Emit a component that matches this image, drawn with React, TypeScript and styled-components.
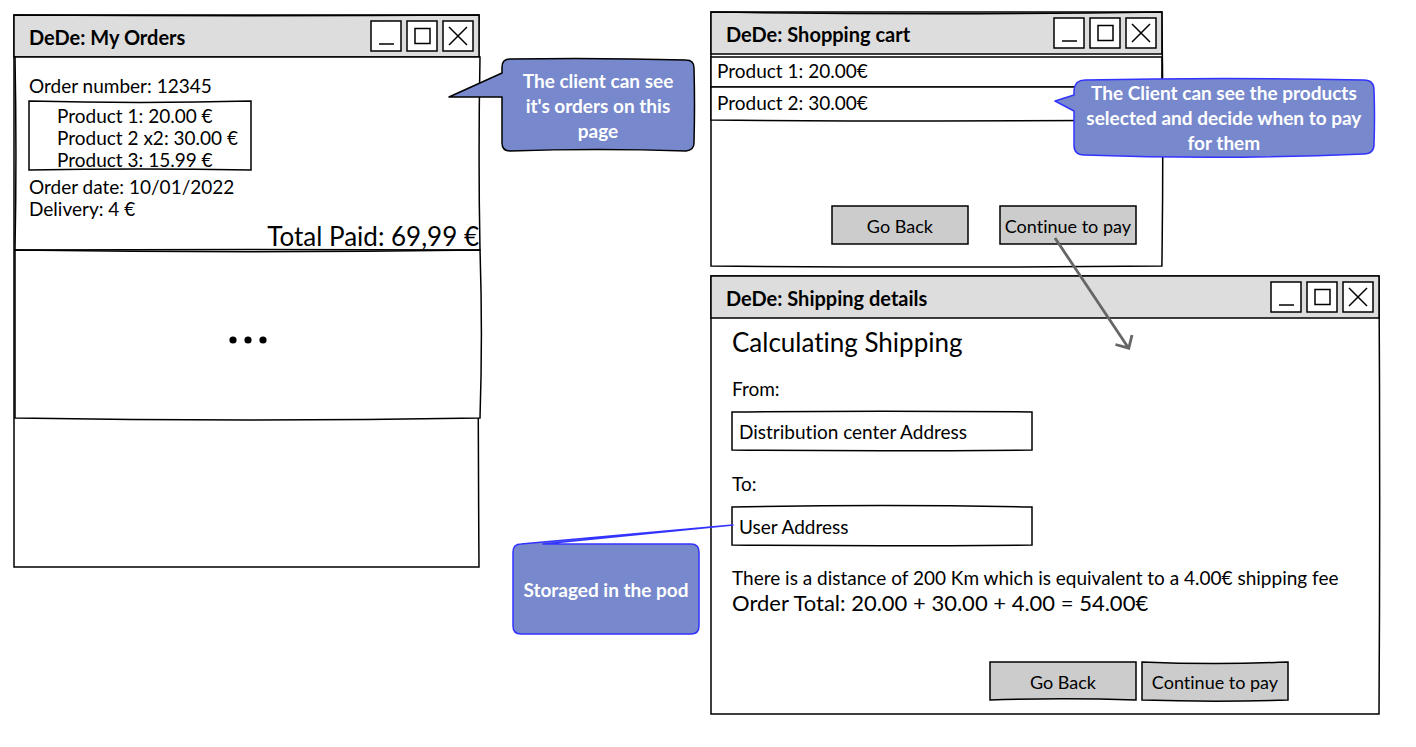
import React from "react";
import styled, { createGlobalStyle } from "styled-components";

const GlobalStyle = createGlobalStyle`
  *, *::before, *::after { box-sizing: border-box; }
  body {
    margin: 0;
    background: #ffffff;
    color: #000000;
    font-family: Lato, sans-serif;
    font-size: 19px;
    line-height: 22px;
    font-variant-ligatures: none;
  }
  h1, h2, p, ul { margin: 0; padding: 0; }
  h2 { font-weight: 400; }
  ul { list-style: none; }
  button, input { font: inherit; color: inherit; font-variant-ligatures: none; }
`;

/* ---------- hand-drawn outlines ---------- */

type Bow = [number, number, number, number];

const Outline = styled.svg`
  position: absolute;
  inset: 0;
  z-index: -1;
  width: 100%;
  height: 100%;
  overflow: visible;
  pointer-events: none;
`;

/* Rectangle whose four edges bulge by a percentage of the box: top, right, bottom, left. */
function Frame({ fill = "#ffffff", bow = [0, 0, 0, 0] }: { fill?: string; bow?: Bow }) {
  const [t, r, b, l] = bow;
  return (
    <Outline viewBox="0 0 100 100" preserveAspectRatio="none" aria-hidden="true">
      <path
        d={`M0 0 Q50 ${t * 2} 100 0 Q${100 + r * 2} 50 100 100 Q50 ${100 + b * 2} 0 100 Q${l * 2} 50 0 0 Z`}
        fill={fill}
        stroke="#000000"
        strokeWidth={1.5}
        vectorEffect="non-scaling-stroke"
      />
    </Outline>
  );
}

const Sketched = styled.div`
  position: relative;
  isolation: isolate;
`;

/* ---------- board ---------- */

const Board = styled.main`
  display: grid;
  grid-template-columns: 465fr 668fr;
  column-gap: 232px;
  align-items: start;
  padding: 12px 37px 32px 14px;
`;

const LeftColumn = styled.div`
  padding-top: 3px;
`;

const RightColumn = styled.div`
  display: flex;
  flex-direction: column;
  gap: 10px;
`;

/* ---------- windows ---------- */

const Window = styled(Sketched).attrs({ as: "section" })<{ $height: number; $width?: string; $layer?: number }>`
  width: ${(p) => p.$width ?? "100%"};
  min-height: ${(p) => p.$height}px;
  z-index: ${(p) => p.$layer ?? 1};
`;

const Bar = styled(Sketched).attrs({ as: "header" })`
  display: flex;
  align-items: center;
  justify-content: space-between;
  height: 42px;
  padding: 0 6px 0 15px;
`;

const BarTitle = styled.h1`
  font-size: 20px;
  line-height: 24px;
  font-weight: 700;
  padding-top: 2px;
`;

const Controls = styled.div`
  display: flex;
  gap: 6px;
`;

const Control = styled.button`
  display: flex;
  width: 30px;
  height: 30px;
  padding: 0;
  border: 0;
  background: none;

  svg {
    display: block;
    overflow: visible;
  }
`;

const controlMarks = [
  { label: "Minimize", d: "M8 23H23" },
  { label: "Maximize", d: "M8 7.5H23V22.5H8Z" },
  { label: "Close", d: "M6 6L24 24M24 6L6 24" },
];

function TitleBar({ title, bow }: { title: string; bow?: Bow }) {
  return (
    <Bar>
      <Frame fill="#dddddd" bow={bow} />
      <BarTitle>{title}</BarTitle>
      <Controls>
        {controlMarks.map((mark) => (
          <Control key={mark.label} type="button" aria-label={mark.label}>
            <svg width="30" height="30" viewBox="0 0 30 30" stroke="#000000" strokeWidth="1.5">
              <rect width="30" height="30" fill="#ffffff" />
              <path d={mark.d} fill="none" />
            </svg>
          </Control>
        ))}
      </Controls>
    </Bar>
  );
}

/* ---------- orders ---------- */

const OrderPanel = styled(Sketched)`
  display: flex;
  flex-direction: column;
  height: 193px;
  margin: 0 -1px 0 1px;
  padding: 18px 1px 0 14px;
`;

const MorePanel = styled(Sketched)`
  display: flex;
  align-items: center;
  justify-content: center;
  min-height: 168px;
  margin: 0 -1px 0 1px;
  padding-top: 12px;
`;

const OrderProducts = styled(Sketched).attrs({ as: "ul" })`
  flex: none;
  width: 222px;
  height: 69px;
  margin: 4px 0 6px;
  padding: 4px 0 0 28px;
  white-space: nowrap;
`;

const Total = styled.p`
  align-self: flex-end;
  padding-top: 2px;
  font-size: 26px;
  line-height: 28px;
  white-space: nowrap;
`;

/* ---------- cart ---------- */

const CartList = styled.ul`
  padding-top: 3px;
`;

const CartRow = styled(Sketched).attrs({ as: "li" })<{ $height: number }>`
  display: flex;
  align-items: center;
  height: ${(p) => p.$height}px;
  padding: 0 6px 2px;
`;

const Actions = styled.div<{ $gap: number; $top: number; $right: number }>`
  display: flex;
  justify-content: flex-end;
  gap: ${(p) => p.$gap}px;
  padding: ${(p) => p.$top}px ${(p) => p.$right}px 0 0;
`;

const ActionButton = styled.button<{ $width: number }>`
  position: relative;
  isolation: isolate;
  width: ${(p) => p.$width}px;
  height: 38px;
  padding: 2px 0 0;
  border: 0;
  background: none;
  font-size: 18px;
  white-space: nowrap;
`;

const Linked = styled.div`
  position: relative;
`;

const Arrow = styled.svg`
  position: absolute;
  left: 53px;
  top: 31px;
  pointer-events: none;
`;

/* ---------- shipping ---------- */

const ShippingForm = styled.form`
  display: flex;
  flex-direction: column;
  padding: 6px 0 0 21px;
`;

const Heading = styled.h2`
  margin-bottom: 19px;
  font-size: 26px;
  line-height: 36px;
`;

const FieldLabel = styled.label`
  margin-bottom: 13px;
  line-height: 20px;
`;

const Field = styled(Sketched)`
  width: 300px;
  height: 38px;
  margin-bottom: 24px;
`;

const FieldInput = styled.input`
  width: 100%;
  height: 100%;
  padding: 0 7px;
  border: 0;
  background: none;
  outline: none;
`;

const Note = styled.p`
  margin-top: -3px;
  line-height: 24px;
`;

const OrderTotal = styled.p`
  font-size: 22px;
  line-height: 26px;
`;

/* ---------- callouts ---------- */

const CalloutBox = styled.aside<{ $w: number; $h: number; $x: string; $y: number }>`
  position: absolute;
  left: ${(p) => p.$x};
  top: ${(p) => p.$y}px;
  z-index: 2;
  display: flex;
  align-items: center;
  justify-content: center;
  width: ${(p) => p.$w}px;
  height: ${(p) => p.$h}px;
  color: #ffffff;
  font-size: 19px;
  font-weight: 700;
  line-height: 25px;
  text-align: center;
  white-space: nowrap;
`;

interface CalloutProps {
  width: number;
  height: number;
  x: string;
  y: number;
  stroke: string;
  path: string;
  lines: string[];
}

function Callout({ width, height, x, y, stroke, path, lines }: CalloutProps) {
  return (
    <CalloutBox $w={width} $h={height} $x={x} $y={y}>
      <Outline viewBox={`0 0 ${width} ${height}`} aria-hidden="true">
        <path d={path} fill="#7788cc" stroke={stroke} strokeWidth={1.5} strokeLinejoin="round" />
      </Outline>
      <p>
        {lines.map((line) => (
          <React.Fragment key={line}>
            {line}
            <br />
          </React.Fragment>
        ))}
      </p>
    </CalloutBox>
  );
}

export default function App() {
  return (
    <>
      <GlobalStyle />
      <Board>
        <LeftColumn>
          <Window $height={552}>
            <Frame bow={[0, -0.2, 0, 0]} />
            <TitleBar title="DeDe: My Orders" bow={[1.5, 0, 0, 0]} />
            <OrderPanel>
              <Frame bow={[0, -0.2, -0.3, 0.2]} />
              <p>Order number: 12345</p>
              <OrderProducts>
                <Frame bow={[2, 0, -1.5, 0]} />
                <li>Product 1: 20.00 €</li>
                <li>Product 2 x2: 30.00 €</li>
                <li>Product 3: 15.99 €</li>
              </OrderProducts>
              <p>Order date: 10/01/2022</p>
              <p>Delivery: 4 €</p>
              <Total>Total Paid: 69,99 €</Total>
            </OrderPanel>
            <MorePanel>
              <Frame bow={[1, 0.3, 1.2, 0]} />
              <svg width="38" height="8" viewBox="0 0 38 8" role="img" aria-label="More orders">
                <circle cx="4" cy="4" r="3.6" />
                <circle cx="19" cy="4" r="3.6" />
                <circle cx="34" cy="4" r="3.6" />
              </svg>
            </MorePanel>
            <Callout
              width={192}
              height={92}
              x="calc(100% + 23px)"
              y={44}
              stroke="#000000"
              path="M0 14V8Q0 0 8 0Q96 -1.5 184 1Q192 1 192 9Q193 46 192 84Q192 91 184 92Q96 89 8 92Q0 92 0 84V38L-53 38Z"
              lines={["The client can see", "it's orders on this", "page"]}
            />
          </Window>
        </LeftColumn>

        <RightColumn>
          <Window $height={254} $width="67.5%" $layer={2}>
            <Frame bow={[0, 0.2, 0.4, 0]} />
            <TitleBar title="DeDe: Shopping cart" bow={[4, 0, 0, 0]} />
            <CartList>
              <CartRow $height={30}>
                <Frame />
                Product 1: 20.00€
              </CartRow>
              <CartRow $height={33}>
                <Frame bow={[0, 0, 3, 0]} />
                Product 2: 30.00€
              </CartRow>
            </CartList>
            <Actions $gap={32} $top={86} $right={26}>
              <ActionButton type="button" $width={136}>
                <Frame fill="#cccccc" />
                Go Back
              </ActionButton>
              <Linked>
                <ActionButton type="button" $width={136}>
                  <Frame fill="#cccccc" />
                  Continue to pay
                </ActionButton>
                <Arrow width="84" height="116" viewBox="0 0 84 116" fill="none" stroke="#666666" strokeWidth="2.8" aria-hidden="true">
                  <path d="M2 1L75.5 111M62.5 107.5L75.8 111.2L79 98" />
                </Arrow>
              </Linked>
            </Actions>
            <Callout
              width={300}
              height={77}
              x="calc(100% - 88px)"
              y={67}
              stroke="#3333ff"
              path="M0 16V11Q1 1 11 1Q150 -2 290 1Q300 1 300 11Q301 38 300 65Q300 75 290 75Q150 81 10 76Q0 76 0 66V32L-19 22Z"
              lines={["The Client can see the products", "selected and decide when to pay", "for them"]}
            />
          </Window>

          <Window $height={438}>
            <Frame bow={[0, 0.1, 0, 0]} />
            <TitleBar title="DeDe: Shipping details" />
            <ShippingForm>
              <Heading>Calculating Shipping</Heading>
              <FieldLabel htmlFor="from">From:</FieldLabel>
              <Field>
                <Frame bow={[-2, 0, 2, 0]} />
                <FieldInput id="from" defaultValue="Distribution center Address" />
              </Field>
              <FieldLabel htmlFor="to">To:</FieldLabel>
              <Field>
                <Frame bow={[-4, 0, 2, 0]} />
                <FieldInput id="to" defaultValue="User Address" />
              </Field>
              <Note>There is a distance of 200 Km which is equivalent to a 4.00€ shipping fee</Note>
              <OrderTotal>Order Total: 20.00 + 30.00 + 4.00 = 54.00€</OrderTotal>
              <Actions $gap={6} $top={46} $right={91}>
                <ActionButton type="button" $width={146}>
                  <Frame fill="#cccccc" bow={[0, 0, -3, 0]} />
                  Go Back
                </ActionButton>
                <ActionButton type="button" $width={146}>
                  <Frame fill="#cccccc" bow={[4, 0, 3, 0]} />
                  Continue to pay
                </ActionButton>
              </Actions>
            </ShippingForm>
            <Callout
              width={186}
              height={90}
              x="-198px"
              y={268}
              stroke="#3333ff"
              path="M30 0L220 -19L8 0Q0 0 0 8V82Q0 90 8 90H178Q186 90 186 82V8Q186 0 178 0Z"
              lines={["Storaged in the pod"]}
            />
          </Window>
        </RightColumn>
      </Board>
    </>
  );
}
